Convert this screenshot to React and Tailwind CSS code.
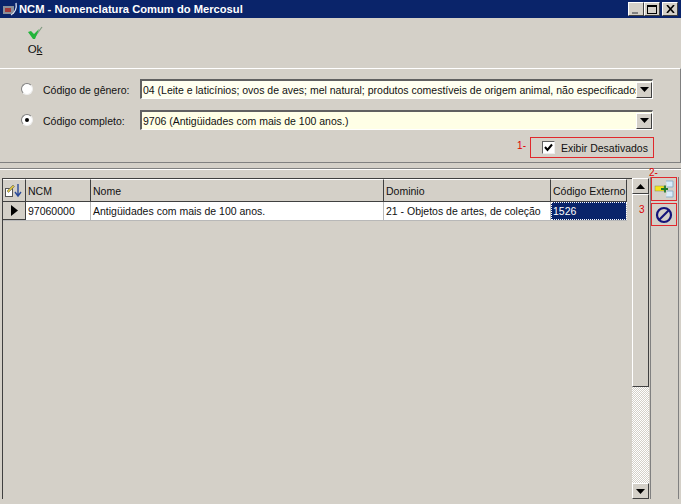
// Raised Win2000 style edge, used by buttons and scrollbar arrows
const raised = "border border-t-white border-l-white border-r-[#404040] border-b-[#404040] bg-[#d4d0c8]";

function CaptionButton({ children, className = "" }) {
  return (
    <div className={`${raised} w-[16px] h-[14px] flex items-center justify-center ${className}`}>
      {children}
    </div>
  );
}

function Arrow({ up = false }) {
  return (
    <svg width="9" height="5" viewBox="0 0 9 5" className={up ? "rotate-180" : ""}>
      <path d="M0 0h9L4.5 5z" fill="#000" />
    </svg>
  );
}

function Combo({ text, bg }) {
  return (
    <div className={`w-[513px] h-[20px] flex items-center border-t-2 border-l-2 border-t-[#606060] border-l-[#606060] border-b border-r border-b-white border-r-white ${bg}`}>
      <div className="flex-1 min-w-0 overflow-hidden whitespace-nowrap pl-[1px] leading-[16px]">{text}</div>
      <div className={`${raised} w-[16px] h-[16px] flex items-center justify-center shrink-0`}>
        <Arrow />
      </div>
    </div>
  );
}

function Radio({ checked }) {
  return (
    <div className="w-[12px] h-[12px] rounded-full bg-white border border-t-[#808080] border-l-[#808080] border-r-[#eeeeee] border-b-[#eeeeee] flex items-center justify-center">
      {checked && <div className="w-[4px] h-[4px] rounded-full bg-black" />}
    </div>
  );
}

function FilterRow({ label, checked, text, bg }) {
  return (
    <div className="flex items-center h-[20px]">
      <div className="w-[43px] pl-[21px]"><Radio checked={checked} /></div>
      <div className="w-[97px] whitespace-nowrap pt-[1px]">{label}</div>
      <Combo text={text} bg={bg} />
    </div>
  );
}

function HeaderCell({ width, children }) {
  return (
    <div className={`${width} h-[22px] shrink-0 flex items-center pl-[2px] border-r border-r-[#404040] border-t border-t-white whitespace-nowrap overflow-hidden`}>
      {children}
    </div>
  );
}

function DataCell({ width, children, className = "" }) {
  return (
    <div className={`${width} h-[18px] shrink-0 flex items-center pl-[2px] border-r border-r-[#b8b8b8] whitespace-nowrap overflow-hidden ${className}`}>
      {children}
    </div>
  );
}

export default function App() {
  return (
    <div className="w-[681px] h-[504px] overflow-hidden bg-[#d4d0c8] flex flex-col text-[10.5px] leading-[14px] text-[#111] font-['Liberation_Sans',Arial,sans-serif]">
      {/* Title bar */}
      <div className="h-[18px] bg-[#0a246a] flex items-center shrink-0 pr-[3px]">
        <svg width="16" height="16" viewBox="0 0 16 16" className="ml-[2px] mr-[1px]">
          <rect x="1" y="5" width="11" height="8" fill="#8a8f9a" />
          <rect x="3" y="7" width="6" height="4" fill="#a03a3a" />
          <path d="M9 14C13 12 15 7 14 2" fill="none" stroke="#dfe6f5" strokeWidth="1.3" />
        </svg>
        <div className="flex-1 font-bold text-white text-[11.2px] whitespace-nowrap">NCM - Nomenclatura Comum do Mercosul</div>
        <CaptionButton>
          <div className="w-[6px] h-[2px] bg-[#808080] mt-[7px] -ml-[2px]" />
        </CaptionButton>
        <CaptionButton className="mr-[2px]">
          <div className="w-[10px] h-[9px] border border-black border-t-2" />
        </CaptionButton>
        <CaptionButton>
          <svg width="9" height="8" viewBox="0 0 9 8"><path d="M1 0l7 8M8 0L1 8" stroke="#000" strokeWidth="1.6" /></svg>
        </CaptionButton>
      </div>

      {/* Toolbar */}
      <div className="h-[50px] shrink-0 pl-[26px] pt-[8px]">
        <div className="w-[18px] flex flex-col items-center">
          <svg width="16" height="15" viewBox="0 0 16 15">
            <path d="M7 12L15 1" fill="none" stroke="#7f9a80" strokeWidth="1.2" />
            <path d="M1 6l3-1 3 3 5-5-4 10H6z" fill="#22b53a" />
          </svg>
          <div className="text-[11.5px] leading-[13px] mt-[2px]">O<span className="underline">k</span></div>
        </div>
      </div>

      {/* Filters */}
      <div className="h-[95px] shrink-0 border-t border-t-white border-b border-b-[#808080] border-r border-r-[#808080] flex flex-col pt-[10px]">
        <FilterRow
          label="Código de gênero:"
          text="04 (Leite e laticínios; ovos de aves; mel natural; produtos comestíveis de origem animal, não especificados"
          bg="bg-[#fffff0]"
        />
        <div className="mt-[11px]">
          <FilterRow checked label="Código completo:" text="9706 (Antigüidades com mais de 100 anos.)" bg="bg-[#ffffe6]" />
        </div>
        <div className="flex justify-end items-center mt-[7px] pr-[26px]">
          <span className="text-[#e00000] text-[10px] mr-[4px] -mt-[4px]">1-</span>
          <div className="w-[124px] h-[21px] border border-[#e0282c] flex items-center pl-[11px]">
            <div className="w-[13px] h-[13px] bg-white border border-t-[#606060] border-l-[#606060] border-r-[#eeeeee] border-b-[#eeeeee] flex items-center justify-center">
              <svg width="9" height="9" viewBox="0 0 9 9"><path d="M1 4l2.5 3L8 1.5" fill="none" stroke="#000" strokeWidth="2" /></svg>
            </div>
            <span className="ml-[6px] whitespace-nowrap">Exibir Desativados</span>
          </div>
        </div>
      </div>

      {/* Splitter */}
      <div className="h-[6px] shrink-0 border-b border-b-[#808080]" />

      {/* Grid and side buttons */}
      <div className="flex-1 min-h-0 flex pt-[8px] pl-[2px] border-t border-t-white">
        <div className="w-[630px] shrink-0 flex flex-col border-t border-l border-t-[#404040] border-l-[#404040] mb-[5px]">
          <div className="flex border-b border-b-[#404040] w-[624px]">
            <HeaderCell width="w-[23px]">
              <svg width="20" height="18" viewBox="0 0 20 18" className="-ml-[1px]">
                <rect x="1.5" y="6.5" width="7" height="8" fill="#fff" stroke="#555" />
                <path d="M3 9l6-6 1.5 1.5-6 6z" fill="#d8c040" stroke="#555" strokeWidth=".5" />
                <path d="M14 2v11M11 10l3 4 3-4" fill="none" stroke="#2a4a9a" strokeWidth="1.4" />
              </svg>
            </HeaderCell>
            <HeaderCell width="w-[65px]">NCM</HeaderCell>
            <HeaderCell width="w-[293px]">Nome</HeaderCell>
            <HeaderCell width="w-[167px]">Dominio</HeaderCell>
            <HeaderCell width="w-[76px]">Código Externo</HeaderCell>
          </div>
          <div className="flex w-[624px] bg-white border-b border-b-[#b8b8b8]">
            <div className="w-[23px] h-[18px] bg-[#d4d0c8] border-r border-r-[#404040] border-b border-b-[#404040] flex items-center justify-center shrink-0">
              <svg width="7" height="11" viewBox="0 0 7 11"><path d="M0 0l7 5.5L0 11z" fill="#000" /></svg>
            </div>
            <DataCell width="w-[65px]">97060000</DataCell>
            <DataCell width="w-[293px]">Antigüidades com mais de 100 anos.</DataCell>
            <DataCell width="w-[167px]">21 - Objetos de artes, de coleção</DataCell>
            <DataCell width="w-[76px]" className="bg-[#0a246a] text-white outline-1 -outline-offset-1 outline-dotted outline-[#fff]">1526</DataCell>
          </div>
        </div>

        {/* Scrollbar */}
        <div className="w-[17px] shrink-0 flex flex-col mb-[5px] bg-[repeating-conic-gradient(#d4d0c8_0_25%,#ffffff_0_50%)] bg-[length:2px_2px]">
          <div className={`${raised} h-[16px] flex items-center justify-center shrink-0`}><Arrow up /></div>
          <div className={`${raised} h-[193px] shrink-0`} />
          <div className="flex-1" />
          <div className={`${raised} h-[16px] flex items-center justify-center shrink-0`}><Arrow /></div>
        </div>

        {/* Side buttons */}
        <div className="w-[29px] shrink-0 border-l border-l-[#808080] border-r border-r-[#808080] mb-[5px] ml-[1px] relative flex flex-col -mt-[1px] gap-[2px]">
          <span className="absolute left-[-2px] top-[-9px] text-[#e00000] text-[10px] leading-[10px]">2-</span>
          <span className="absolute left-[-12px] top-[28px] text-[#e00000] text-[10px] leading-[10px]">3</span>
          <div className="w-[26px] h-[24px] border border-[#e0282c] flex items-center justify-center">
            <svg width="20" height="18" viewBox="0 0 20 18">
              <rect x="1" y="6" width="9" height="5" fill="#f5e51a" stroke="#8a8a50" strokeWidth=".5" />
              <path d="M7 9h7M11 5.5v7" stroke="#1f7a2c" strokeWidth="1.8" />
              <path d="M12 1h7v6h-6M13 11h6v6h-7" fill="#d8ecfa" stroke="#8fb0c8" strokeWidth="1" />
            </svg>
          </div>
          <div className="w-[26px] h-[23px] border border-[#e0282c] flex items-center justify-center">
            <svg width="18" height="18" viewBox="0 0 18 18">
              <circle cx="9" cy="9" r="7" fill="none" stroke="#14147a" strokeWidth="2.2" />
              <path d="M4 14L14 4" stroke="#14147a" strokeWidth="2.2" />
            </svg>
          </div>
        </div>
      </div>
    </div>
  );
}
